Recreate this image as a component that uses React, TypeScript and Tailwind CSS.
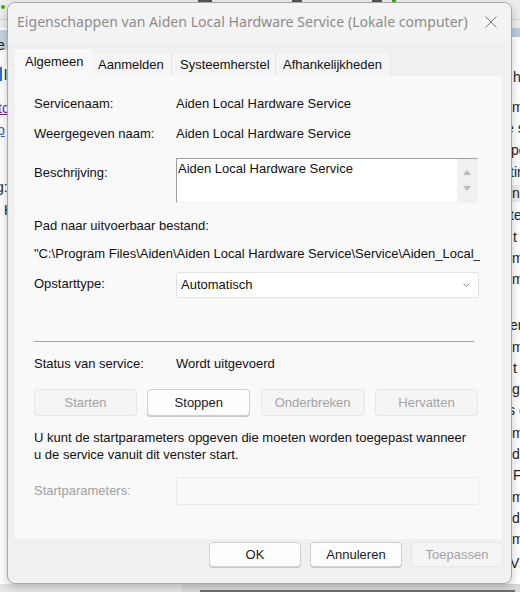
import React from "react";

const rightFrags: [number, string, number][] = [
  [77, "h", 513],
  [107, "m", 512],
  [128, "e s", 506],
  [150, "pe", 511],
  [172, "tir", 510],
  [193, "n", 512],
  [215, "te", 510],
  [237, "t", 513],
  [258, "m", 512],
  [279, "m", 512],
  [325, "er", 510],
  [347, "m", 512],
  [368, "t", 513],
  [389, "gr", 512],
  [410, "s c", 508],
  [433, "m", 512],
  [454, "do", 512],
  [475, "F", 513],
  [497, "m", 512],
  [518, "d", 512],
  [539, "m", 512],
  [563, "Vs", 510],
];

function Btn({
  children,
  disabled,
  className = "",
}: {
  children: React.ReactNode;
  disabled?: boolean;
  className?: string;
}) {
  return (
    <div
      className={
        "flex items-center justify-center rounded-[4px] border text-[13px] " +
        (disabled
          ? "border-[#e6e6e6] bg-[#f5f5f5] text-[#a3a3a3] "
          : "border-[#d0d0d0] bg-[#fdfdfd] text-[#1a1a1a] shadow-[0_1px_0_#c8c8c8] ") +
        className
      }
    >
      {children}
    </div>
  );
}

export default function App() {
  return (
    <div className="relative w-[520px] h-[592px] overflow-hidden bg-white font-['Liberation_Sans',Arial,sans-serif] text-black">
      {/* background window (behind the dialog) */}
      <div className="absolute left-0 top-0 w-[520px] h-[28px] bg-[#eeeeee]" />
      <div className="absolute left-0 top-[19px] w-[520px] h-[1px] bg-[#d4d4d4]" />
      <div className="absolute left-[1px] top-[5px] w-[4px] h-[4px] rounded-full bg-[#38b000]" />
      <div className="absolute left-[198px] top-0 w-[14px] h-[2px] bg-[#555]" />
      <div className="absolute left-[292px] top-0 w-[10px] h-[2px] bg-[#555]" />
      <div className="absolute left-[372px] top-0 w-[10px] h-[2px] bg-[#555]" />
      <div className="absolute left-[392px] top-0 w-[4px] h-[3px] bg-[#38b000]" />
      <div className="absolute left-0 top-[30px] w-[10px] h-[20px] bg-[#c6d4e4]" />
      <div className="absolute left-[505px] top-[28px] w-[15px] h-[9px] bg-[#b9cbe0]" />
      <div className="absolute left-[505px] top-[185px] w-[15px] h-[17px] bg-[#ebebeb]" />
      <div className="absolute left-0 top-[584px] w-[520px] h-[8px] bg-[#e6e6e6]" />
      <div className="absolute left-[182px] top-[584px] w-[338px] h-[8px] bg-[#dadada]" />
      <div className="absolute left-[200px] top-[590px] w-[315px] h-[2px] bg-[#6e6e6e]" />

      <span className="absolute left-[-3px] top-[37px] text-[14px] leading-[16px] text-[#222]">e</span>
      <span className="absolute left-[0px] top-[67px] w-[2px] h-[14px] bg-[#2a6ad0]" />
      <span className="absolute left-[4px] top-[67px] text-[14px] leading-[16px] text-[#222]">l</span>
      <span className="absolute left-[-2px] top-[100px] text-[14px] leading-[16px] text-[#7a1fa0] underline">to</span>
      <span className="absolute left-[-3px] top-[122px] text-[14px] leading-[16px] text-[#1a5fd0] underline">p</span>
      <span className="absolute left-[-4px] top-[179px] text-[14px] leading-[16px] text-[#222]">g:</span>
      <span className="absolute left-[4px] top-[202px] text-[14px] leading-[16px] text-[#222]">H</span>
      {rightFrags.map(([y, t, x], i) => (
        <span
          key={i}
          className="absolute text-[14px] leading-[14px] text-[#222] whitespace-nowrap"
          style={{ top: y - 7, left: x }}
        >
          {t}
        </span>
      ))}

      {/* dialog window */}
      <div className="absolute left-[7px] top-[2px] w-[505px] h-[582px] rounded-[8px] border border-[#a8a8a8] bg-[#f0f0f0] shadow-[0_3px_10px_rgba(0,0,0,0.22)] flex flex-col overflow-hidden">
        {/* title bar */}
        <div className="h-[38px] flex items-center justify-between pl-[9px] pr-[14px] bg-[#f3f3f3]">
          <span className="font-['Noto_Sans',sans-serif] text-[14.1px] text-[#8c8c8c] whitespace-nowrap">
            Eigenschappen van Aiden Local Hardware Service (Lokale computer)
          </span>
          <svg width="12" height="12" viewBox="0 0 12 12" className="shrink-0">
            <path d="M0.5 0.5 L11.5 11.5 M11.5 0.5 L0.5 11.5" stroke="#7a7a7a" strokeWidth="1" />
          </svg>
        </div>

        {/* tabs */}
        <div className="mt-[8px] ml-[7px] flex items-end h-[27px] text-[13px]">
          <div className="w-[77px] h-[27px] bg-[#f9f9f9] pl-[10px] pt-[5px] leading-[16px] text-[#111]">
            Algemeen
          </div>
          <div className="w-[80px] h-[23px] bg-[#f5f5f5] border-r border-[#e4e4e4] pl-[6px] pt-[4px] leading-[16px] text-[#111]">
            Aanmelden
          </div>
          <div className="w-[104px] h-[23px] bg-[#f5f5f5] border-r border-[#e4e4e4] pl-[8px] pt-[4px] leading-[16px] text-[#111]">
            Systeemherstel
          </div>
          <div className="w-[115px] h-[23px] bg-[#f5f5f5] border-r border-[#e4e4e4] pl-[7px] pt-[4px] leading-[16px] text-[#111]">
            Afhankelijkheden
          </div>
        </div>

        {/* tab panel */}
        <div className="ml-[7px] w-[487px] h-[463px] bg-[#f9f9f9] flex flex-col pl-[19px] pt-[18px] text-[13px] text-[#111]">
          <div className="flex h-[20px] leading-[20px]">
            <div className="w-[142px]">Servicenaam:</div>
            <div>Aiden Local Hardware Service</div>
          </div>
          <div className="flex h-[20px] leading-[20px] mt-[10px]">
            <div className="w-[142px]">Weergegeven naam:</div>
            <div>Aiden Local Hardware Service</div>
          </div>
          <div className="flex mt-[14px] h-[45px]">
            <div className="w-[142px] pt-[7px] leading-[16px]">Beschrijving:</div>
            <div className="w-[302px] h-[45px] flex border-t border-l border-[#a0a0a0] border-r border-b border-r-[#f0f0f0] border-b-[#f0f0f0] bg-white">
              <div className="flex-1 pl-[1px] pt-[2px] leading-[16px]">Aiden Local Hardware Service</div>
              <div className="w-[20px] h-full bg-[#f0f0f0] flex flex-col items-center justify-between py-[11px]">
                <svg width="8" height="5" viewBox="0 0 8 5">
                  <path d="M4 0 L8 5 L0 5 Z" fill="#bdbdbd" />
                </svg>
                <svg width="8" height="5" viewBox="0 0 8 5">
                  <path d="M0 0 L8 0 L4 5 Z" fill="#bdbdbd" />
                </svg>
              </div>
            </div>
          </div>
          <div className="h-[20px] leading-[20px] mt-[13px]">Pad naar uitvoerbaar bestand:</div>
          <div className="h-[20px] leading-[20px] mt-[8px] w-[446px] overflow-hidden whitespace-nowrap">
            {'"C:\\Program Files\\Aiden\\Aiden Local Hardware Service\\Service\\Aiden_Local_'}
          </div>
          <div className="flex mt-[8px] h-[26px] items-center">
            <div className="w-[142px] leading-[16px] -mt-[2px]">Opstarttype:</div>
            <div className="w-[303px] h-[26px] rounded-[3px] border border-[#e2e2e2] bg-white flex items-center justify-between pl-[4px] pr-[8px]">
              <span>Automatisch</span>
              <svg width="7" height="4" viewBox="0 0 7 4">
                <path d="M0.5 0.5 L3.5 3.5 L6.5 0.5" stroke="#8a8a8a" strokeWidth="1" fill="none" />
              </svg>
            </div>
          </div>
          <div className="mt-[43px] w-[440px] h-[1px] bg-[#a3a3a3]" />
          <div className="flex h-[20px] leading-[20px] mt-[12px]">
            <div className="w-[142px]">Status van service:</div>
            <div>Wordt uitgevoerd</div>
          </div>
          <div className="mt-[15px] w-[444px] h-[27px] flex justify-between">
            <Btn disabled className="w-[103px] h-[27px]">Starten</Btn>
            <Btn className="w-[103px] h-[27px]">Stoppen</Btn>
            <Btn disabled className="w-[104px] h-[27px]">Onderbreken</Btn>
            <Btn disabled className="w-[103px] h-[27px]">Hervatten</Btn>
          </div>
          <div className="mt-[13px] leading-[17px] whitespace-nowrap">
            U kunt de startparameters opgeven die moeten worden toegepast wanneer
            <br />u de service vanuit dit venster start.
          </div>
          <div className="flex mt-[14px] h-[28px] items-center">
            <div className="w-[142px] text-[#a0a0a0] leading-[16px]">Startparameters:</div>
            <div className="w-[303px] h-[28px] rounded-[2px] border border-[#ececec] bg-[#f9f9f9]" />
          </div>
        </div>

        {/* footer buttons */}
        <div className="mt-[3px] flex justify-end gap-[9px] pr-[8px]">
          <Btn className="w-[92px] h-[25px]">OK</Btn>
          <Btn className="w-[92px] h-[25px]">Annuleren</Btn>
          <Btn disabled className="w-[92px] h-[25px]">Toepassen</Btn>
        </div>
      </div>
    </div>
  );
}
